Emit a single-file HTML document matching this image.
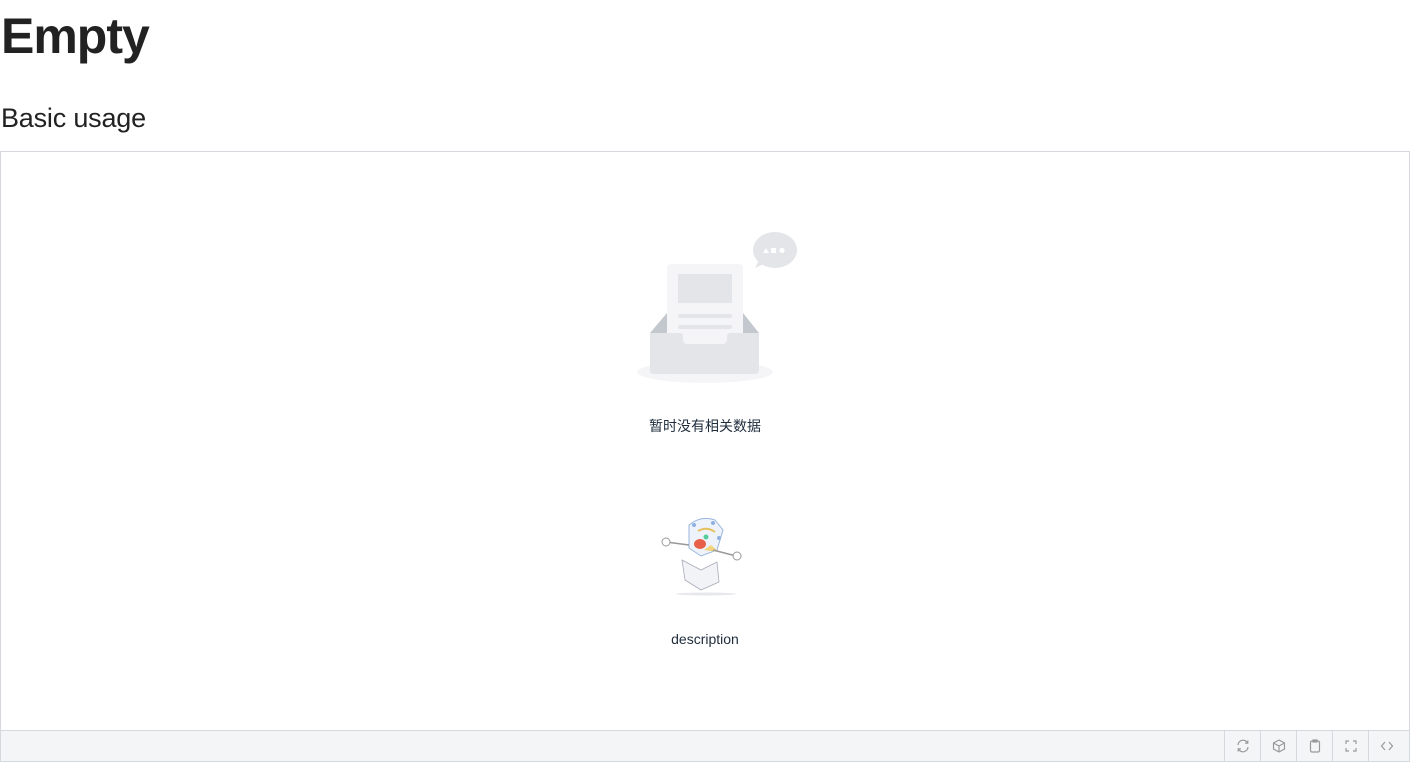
<!DOCTYPE html>
<html><head><meta charset="utf-8"><style>
body{margin:0;background:#fff;font-family:"Liberation Sans","Noto Sans CJK SC",sans-serif;color:#222;width:1410px;height:762px;overflow:hidden;position:relative}
h1{position:absolute;left:1px;top:3px;margin:0;font-size:50px;line-height:66px;font-weight:bold;letter-spacing:-1px}
h2{position:absolute;left:1px;top:99px;margin:0;font-size:27px;font-weight:normal;line-height:38px;letter-spacing:-0.2px}
.frame{position:absolute;left:0;top:151px;width:1408px;height:609px;border:1px solid #d5d8dc}
.foot{position:absolute;left:0;right:0;bottom:0;height:30px;border-top:1px solid #d5d8dc;background:#f4f5f7}
.btn{position:absolute;top:0;width:35px;height:30px;border-left:1px solid #d5d8dc;display:flex;align-items:center;justify-content:center}
.t{position:absolute;left:0;width:1408px;text-align:center;font-size:14px;color:#1f2d3d}
</style></head><body>
<h1>Empty</h1>
<h2>Basic usage</h2>
<div class="frame">
<svg style="position:absolute;left:619px;top:69px" width="200" height="170" viewBox="620 221 200 170">
<ellipse cx="705" cy="372" rx="68" ry="11" fill="#f5f5f7"/>
<polygon points="650,333 667,313 743,313 759,333" fill="#c3c8cf"/>
<rect x="667" y="264" width="76" height="82" rx="4" fill="#f5f5f7"/>
<rect x="678" y="274" width="54" height="29" fill="#e3e5e9"/>
<rect x="678" y="314" width="54" height="4" rx="2" fill="#e3e5e9"/>
<rect x="678" y="325" width="54" height="4" rx="2" fill="#e3e5e9"/>
<path d="M650 333 H680 Q683 333 683 337 V340 Q683 344 688 344 H722 Q727 344 727 340 V337 Q727 333 731 333 H759 V370 Q759 374 755 374 H654 Q650 374 650 370 Z" fill="#e3e5e9"/>
<ellipse cx="775" cy="250" rx="22" ry="18" fill="#e3e5e9"/>
<path d="M760 258 L755 268 L768 262 Z" fill="#e3e5e9"/>
<polygon points="763,253 766,248 769,253" fill="#fff"/>
<rect x="771" y="248" width="5" height="5" fill="#fff"/>
<circle cx="782" cy="250.5" r="2.6" fill="#fff"/>
</svg>
<div class="t" style="top:264px">暂时没有相关数据</div>
<svg style="position:absolute;left:655px;top:361px" width="100" height="85" viewBox="655 513 100 85">
<ellipse cx="705" cy="594" rx="30" ry="1.5" fill="#e6e8ec"/>
<path d="M681 560 L700 570 L716 562 L718 582 L700 590 L684 580 Z" fill="#f2f3f6" stroke="#aab" stroke-width=".8"/>
<path d="M688 525 Q700 515 714 520 L722 530 L716 550 L700 556 L688 548 Z" fill="#eef3fb" stroke="#9ab6dc" stroke-width="1"/>
<circle cx="693" cy="525" r="2" fill="#8fb0e0"/><circle cx="712" cy="523" r="2" fill="#8fb0e0"/><circle cx="718" cy="538" r="2" fill="#8fb0e0"/>
<path d="M697 531 Q706 526 714 532" stroke="#e6c060" stroke-width="2" fill="none"/>
<ellipse cx="699" cy="544" rx="6" ry="5" fill="#e8604a"/>
<path d="M703 550 L718 552 L710 545 Z" fill="#f3d57a"/>
<circle cx="705" cy="537" r="2.5" fill="#5c9"/>
<path d="M688 545 L665 542 M712 550 L735 556" stroke="#999" stroke-width="1.5"/>
<circle cx="665" cy="542" r="4" fill="#fff" stroke="#999"/><circle cx="736" cy="556" r="4" fill="#fff" stroke="#999"/>
</svg>
<div class="t" style="top:479px">description</div>
<div class="foot">
<div class="btn" style="left:1223px"><svg width="16" height="16" viewBox="0 0 16 16" fill="none" stroke="#999" stroke-width="1.2"><path d="M3 7A5 5 0 0 1 12.5 5M13 9A5 5 0 0 1 3.5 11"/><path d="M12.8 2.5V5.2H10M3.2 13.5V10.8H6"/></svg></div>
<div class="btn" style="left:1259px"><svg width="16" height="16" viewBox="0 0 16 16" fill="none" stroke="#999" stroke-width="1.2"><path d="M8 2L13.5 5V11L8 14L2.5 11V5Z M2.5 5L8 8L13.5 5M8 8V14"/></svg></div>
<div class="btn" style="left:1295px"><svg width="16" height="16" viewBox="0 0 16 16" fill="none" stroke="#999" stroke-width="1.2"><rect x="3.5" y="3" width="9" height="11" rx="1.5"/><rect x="6" y="2" width="4" height="2"/></svg></div>
<div class="btn" style="left:1331px"><svg width="16" height="16" viewBox="0 0 16 16" fill="none" stroke="#999" stroke-width="1.2"><path d="M3 6V3H6M10 3H13V6M13 10V13H10M6 13H3V10"/></svg></div>
<div class="btn" style="left:1367px"><svg width="16" height="16" viewBox="0 0 16 16" fill="none" stroke="#999" stroke-width="1.2"><path d="M6 4L2.5 8L6 12M10 4L13.5 8L10 12"/></svg></div>
</div>
</div>
</body></html>
